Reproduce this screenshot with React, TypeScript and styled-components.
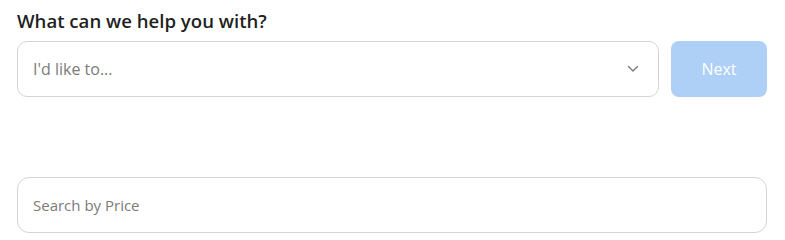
import React from "react";
import styled, { createGlobalStyle } from "styled-components";

const GlobalStyle = createGlobalStyle`
  body {
    margin: 0;
    background: #ffffff;
    font-family: "Open Sans", "Noto Sans", sans-serif;
    color: #212121;
  }
`;

export default function App() {
  return (
    <>
      <GlobalStyle />
      <Page>
        <Title>What can we help you with?</Title>
        <Row>
          <SelectBox>
            <Placeholder>I'd like to...</Placeholder>
            <svg width="12" height="8" viewBox="0 0 12 8" fill="none">
              <path
                d="M1.5 1.5L6 6L10.5 1.5"
                stroke="#7a7a7a"
                strokeWidth="1.4"
                strokeLinecap="round"
                strokeLinejoin="round"
              />
            </svg>
          </SelectBox>
          <NextButton disabled>Next</NextButton>
        </Row>
        <SearchInput placeholder="Search by Price" />
      </Page>
    </>
  );
}

const Page = styled.main`
  width: 750px;
  padding: 9px 0 0 17px;
  display: flex;
  flex-direction: column;
`;

const Title = styled.h2`
  margin: 0 0 8px;
  font-size: 18.6px;
  font-weight: 600;
  line-height: 24px;
  color: #1f1f1f;
`;

const Row = styled.div`
  display: flex;
  gap: 12px;
  margin-bottom: 80px;
`;

const SelectBox = styled.div`
  flex: 1;
  height: 56px;
  box-sizing: border-box;
  border: 1px solid #d4d4d4;
  border-radius: 10px;
  padding: 0 19px 0 15px;
  display: flex;
  align-items: center;
  justify-content: space-between;
  background: #fff;
`;

const Placeholder = styled.span`
  font-size: 16px;
  color: #7b7b7b;
`;

const NextButton = styled.button`
  width: 96px;
  height: 56px;
  border: none;
  border-radius: 8px;
  background: #aed0f6;
  color: #ffffff;
  font-family: "Open Sans", "Noto Sans", sans-serif;
  font-size: 16px;
  font-weight: 500;
`;

const SearchInput = styled.input`
  width: 100%;
  height: 56px;
  box-sizing: border-box;
  border: 1px solid #d4d4d4;
  border-radius: 12px;
  padding: 0 15px;
  font-family: "Open Sans", "Noto Sans", sans-serif;
  font-size: 15px;
  outline: none;

  &::placeholder {
    color: #7b7b7b;
  }
`;
